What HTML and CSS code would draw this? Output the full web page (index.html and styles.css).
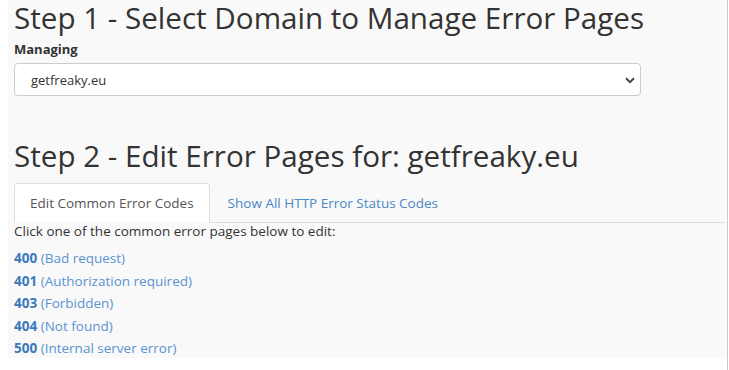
FILE: index.html
```html
<!DOCTYPE html>
<html lang="en">
<head>
  <meta charset="UTF-8" />
  <title>Error Pages</title>
  <link rel="stylesheet" href="styles.css">
</head>
<body>
  <div class="frame">
    <div class="panel">
      <h1 class="step">Step 1 - Select Domain to Manage Error Pages</h1>
      <label class="field-label" for="domain">Managing</label>
      <div class="select-wrap">
        <select id="domain" class="domain-select">
          <option>getfreaky.eu</option>
        </select>
        <svg class="caret" width="10" height="7" viewBox="0 0 10 7"><path d="M1 1.2 5 5.2 9 1.2" fill="none" stroke="#444" stroke-width="2"/></svg>
      </div>

      <h1 class="step step-two">Step 2 - Edit Error Pages for: getfreaky.eu</h1>
      <div class="tabs">
        <div class="tab active">Edit Common Error Codes</div>
        <div class="tab">Show All HTTP Error Status Codes</div>
      </div>
      <p class="hint">Click one of the common error pages below to edit:</p>
      <ul class="codes">
        <li><a href="#"><b>400</b> (Bad request)</a></li>
        <li><a href="#"><b>401</b> (Authorization required)</a></li>
        <li><a href="#"><b>403</b> (Forbidden)</a></li>
        <li><a href="#"><b>404</b> (Not found)</a></li>
        <li><a href="#"><b>500</b> (Internal server error)</a></li>
      </ul>
    </div>
    <div class="edge"></div>
  </div>
</body>
</html>
```

FILE: styles.css
```css
* { margin: 0; padding: 0; box-sizing: border-box; }
body {
  font-family: 'Open Sans', 'Liberation Sans', sans-serif;
  background: #fff;
  color: #333;
  margin-left: 8px;
}
.frame {
  display: flex;
  gap: 2px;
  height: 370px;
}
.panel {
  width: 717px;
  height: 358px;
  background: #f9f9f9;
  padding: 0 0 0 6px;
}
.edge {
  width: 1px;
  background: #c8c8c8;
}
.step {
  font-size: 29.6px;
  font-weight: 400;
  line-height: 36px;
  color: #333;
  white-space: nowrap;
}
.field-label {
  display: block;
  font-size: 13px;
  font-weight: 700;
  margin-top: 4px;
  line-height: 18px;
}
.select-wrap {
  position: relative;
  width: 627px;
  margin-top: 5px;
}
.domain-select {
  appearance: none;
  width: 100%;
  height: 33px;
  padding: 0 16px;
  font-family: inherit;
  font-size: 13px;
  color: #333;
  background: #fff;
  border: 1px solid #ccc;
  border-radius: 4px;
}
.caret {
  position: absolute;
  right: 6px;
  top: 14px;
}
.step-two {
  margin-top: 42px;
}
.tabs {
  display: flex;
  margin-top: 9px;
  border-bottom: 1px solid #ddd;
}
.tab {
  font-size: 13.5px;
  line-height: 18px;
  padding: 10px 15px;
  color: #4a87c6;
  border: 1px solid transparent;
  margin-bottom: -1px;
  margin-right: 2px;
}
.tab.active {
  color: #555;
  background: #fff;
  border-color: #ddd #ddd transparent;
  border-radius: 4px 4px 0 0;
}
.hint {
  font-size: 13.5px;
  line-height: 18px;
  margin-top: -1px;
}
.codes {
  list-style: none;
  margin-top: 7px;
}
.codes li {
  font-size: 13.5px;
  line-height: 22.5px;
}
.codes a {
  color: #5a93d0;
  text-decoration: none;
}
.codes b {
  color: #3b79ba;
}
```
